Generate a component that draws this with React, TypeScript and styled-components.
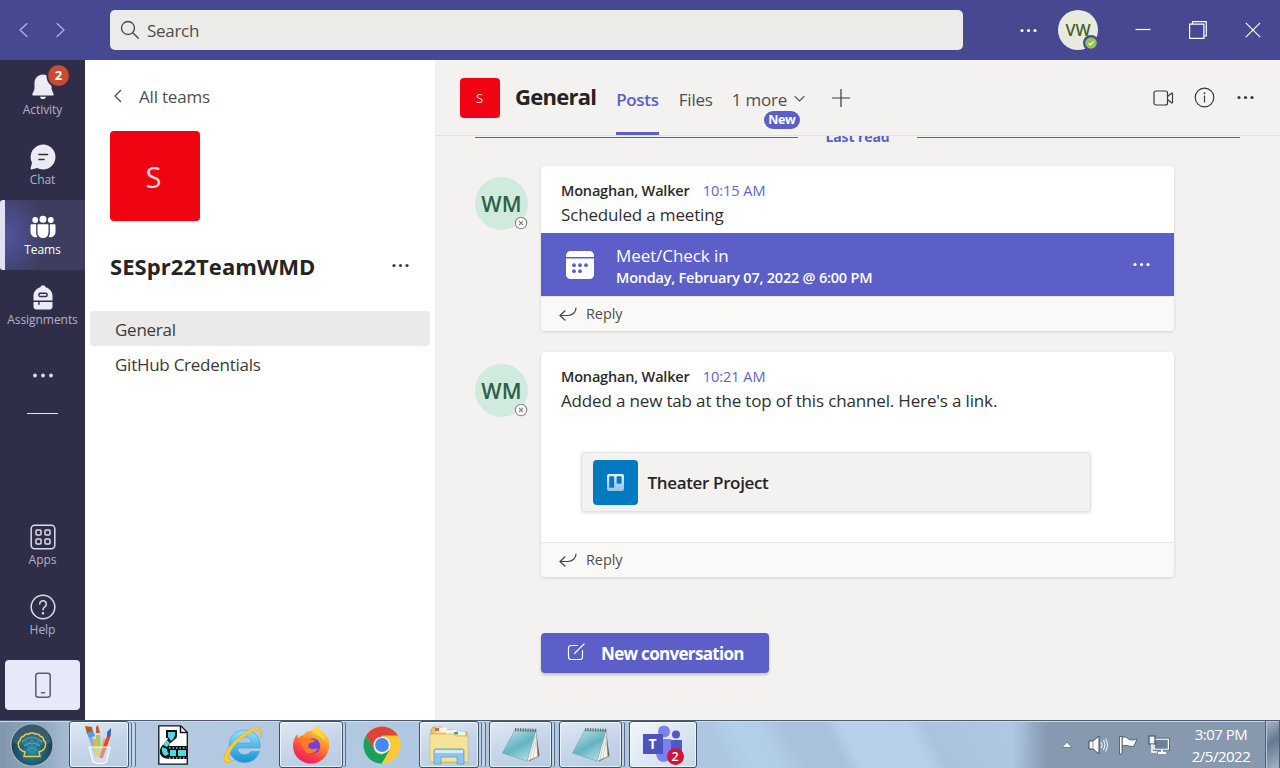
import React from 'react';
import styled, { createGlobalStyle, css } from 'styled-components';

const Global = createGlobalStyle`
  * { box-sizing: border-box; }
  body { margin: 0; overflow: hidden; font-family: 'Open Sans', 'Noto Sans', sans-serif; }
  svg { display: block; flex: none; }
`;

const Screen = styled.div`
  width: 1280px;
  height: 768px;
  display: flex;
  flex-direction: column;
  color: #252423;
  white-space: nowrap;
`;

/* ---------- title bar ---------- */
const TitleBar = styled.header`
  height: 60px;
  flex: none;
  display: flex;
  align-items: center;
  background: #464891;
  color: #fff;
`;
const NavArrows = styled.div`
  width: 110px;
  padding-left: 18px;
  display: flex;
  gap: 24px;
`;
const SearchBox = styled.div`
  width: 853px;
  height: 40px;
  border-radius: 5px;
  background: #ebebe9;
  color: #504e4c;
  display: flex;
  align-items: center;
  gap: 7px;
  padding-left: 10px;
  font-size: 17px;
  letter-spacing: -0.3px;
`;
const TitleActions = styled.div`
  flex: 1;
  display: flex;
  align-items: center;
  padding-left: 57px;
`;
const Me = styled.div`
  position: relative;
  width: 40px;
  height: 40px;
  margin: 0 37px 0 21px;
  border-radius: 50%;
  background: #e7ebdd;
  color: #4a5f2c;
  font-size: 16px;
  font-weight: 600;
  letter-spacing: -0.1px;
  display: flex;
  align-items: center;
  justify-content: center;
`;
const Badge = styled.span`
  position: absolute;
  display: flex;
`;
const MeBadge = styled(Badge)`right: -1px; bottom: -1px;`;
const WindowButtons = styled.div`
  display: flex;
  align-items: center;
  gap: 38px;
`;

/* ---------- body ---------- */
const Body = styled.div`
  height: 660px;
  flex: none;
  display: flex;
`;
const Rail = styled.nav`
  width: 85px;
  background: #2f2e49;
  display: flex;
  flex-direction: column;
  align-items: center;
`;
const RailItem = styled.div<{ $active?: boolean }>`
  position: relative;
  width: 85px;
  height: 70px;
  flex: none;
  display: flex;
  flex-direction: column;
  align-items: center;
  padding-top: 14px;
  color: #b3b2c4;
  font-size: 12px;
  line-height: 16px;
  letter-spacing: -0.05px;
  gap: 2px;
  ${p => p.$active && css`
    color: #fff;
    border-left: 5px solid #e2e2f6;
    border-radius: 3px 0 0 3px;
    padding-right: 5px;
    background: radial-gradient(ellipse 42px 50px at 0 50%, #5356a0 0%, #484a84 45%, #3d3e5f 100%);
  `}
`;
const Count = styled.span`
  position: absolute;
  left: 48px;
  top: 5px;
  width: 21px;
  height: 21px;
  border-radius: 50%;
  background: #cc4a31;
  color: #fff;
  font-size: 13px;
  font-weight: 700;
  line-height: 21px;
  text-align: center;
`;
const RailMore = styled.div`
  height: 70px;
  display: flex;
  align-items: center;
`;
const RailRule = styled.div`
  width: 31px;
  height: 1px;
  margin: 3px 0 96px;
  background: #e0e0ec;
`;
const PhoneButton = styled.div`
  width: 75px;
  height: 50px;
  margin-top: 10px;
  border-radius: 4px;
  background: #e8e9f8;
  display: flex;
  align-items: center;
  justify-content: center;
`;

/* ---------- team panel ---------- */
const TeamPanel = styled.aside`
  width: 350px;
  background: #fff;
  display: flex;
  flex-direction: column;
`;
const BackLink = styled.div`
  display: flex;
  align-items: center;
  gap: 16px;
  height: 24px;
  margin: 24px 0 23px 28px;
  color: #504e4c;
  font-size: 17px;
  letter-spacing: -0.2px;
`;
const TeamTile = styled.div<{ $size: number; $font: number }>`
  width: ${p => p.$size}px;
  height: ${p => p.$size}px;
  flex: none;
  border-radius: 4px;
  background: #f00411;
  color: #f9dcdc;
  font-size: ${p => p.$font}px;
  padding-right: ${p => (p.$size > 50 ? 3 : 1)}px;
  display: flex;
  align-items: center;
  justify-content: center;
`;
const TeamBlock = styled.div`padding-left: 25px;`;
const TeamTitle = styled.div`
  display: flex;
  align-items: center;
  justify-content: space-between;
  height: 30px;
  margin: 30px 26px 30px 25px;
  font-size: 22px;
  font-weight: 700;
  letter-spacing: 0.06px;
  svg { margin-bottom: 1px; }
`;
const Channel = styled.div<{ $selected?: boolean }>`
  height: 35px;
  margin: 0 5px;
  padding-left: 25px;
  border-radius: 4px;
  background: ${p => (p.$selected ? '#ebeae9' : 'transparent')};
  color: #3b3a39;
  font-size: 17px;
  letter-spacing: -0.26px;
  line-height: 37px;
`;

/* ---------- channel ---------- */
const Main = styled.main`
  flex: 1;
  background: #f3f2f1;
  display: flex;
  flex-direction: column;
`;
const ChannelHeader = styled.div`
  height: 76px;
  flex: none;
  border-bottom: 1px solid #e3e2e1;
  display: flex;
  padding: 0 26px 0 25px;
`;
const HeaderTile = styled.div`padding: 18px 15px 0 0;`;
const ChannelName = styled.h1`
  margin: 0 20px 0 0;
  font-size: 22px;
  font-weight: 700;
  line-height: 72px;
  letter-spacing: -0.75px;
`;
const Tab = styled.div<{ $active?: boolean; $gap: number }>`
  position: relative;
  height: 75px;
  margin-right: ${p => p.$gap}px;
  display: flex;
  gap: 7px;
  align-items: center;
  padding-top: ${p => (p.$active ? 6 : 3)}px;
  border-bottom: ${p => (p.$active ? '3px solid #5b5fc7' : '0')};
  color: ${p => (p.$active ? '#5b5fc7' : '#504e4c')};
  font-weight: ${p => (p.$active ? 600 : 400)};
  font-size: 17px;
  letter-spacing: ${p => (p.$active ? -0.3 : -0.2)}px;
`;
const NewPill = styled.span`
  position: absolute;
  left: 32px;
  top: 51px;
  width: 36px;
  height: 18px;
  border-radius: 9px;
  background: #5b5fc7;
  color: #fff;
  font-size: 12.5px;
  font-weight: 700;
  line-height: 17px;
  letter-spacing: -0.4px;
  text-align: center;
`;
const HeaderActions = styled.div`
  flex: 1;
  display: flex;
  align-items: center;
  justify-content: flex-end;
  gap: 20px;
`;
const MoreActions = styled.div`padding-left: 2px;`;
const AddTab = styled.div`display: flex; align-items: center;`;

const Feed = styled.div`
  flex: 1;
  overflow: hidden;
  padding-left: 40px;
`;
const LastRead = styled.div`
  display: flex;
  align-items: center;
  width: 765px;
  height: 20px;
  margin: -9px 0 19px;
  color: #5b5fc7;
  font-size: 14px;
  font-weight: 700;
  letter-spacing: -0.1px;
  line-height: 18px;
  &::before, &::after { content: ''; flex: 1; height: 1px; background: #5b5fc7; margin-top: 1px; }
  span { width: 119px; text-align: center; }
`;
const Post = styled.article`
  display: flex;
  gap: 13px;
  margin-bottom: 21px;
`;
const Avatar = styled.div<{ $top: number }>`
  position: relative;
  width: 53px;
  height: 53px;
  margin-top: ${p => p.$top}px;
  border-radius: 50%;
  background: #d0ebdd;
  color: #2b6149;
  font-size: 21.5px;
  font-weight: 600;
  letter-spacing: 0.2px;
  padding-bottom: 1px;
  display: flex;
  align-items: center;
  justify-content: center;
`;
const AvatarBadge = styled(Badge)`right: 0; bottom: 0;`;
const Card = styled.div`
  width: 633px;
  border-radius: 4px;
  background: #fff;
  box-shadow: 0 1px 3px rgba(0, 0, 0, 0.14);
  overflow: hidden;
`;
const CardText = styled.div<{ $height: number }>`
  height: ${p => p.$height}px;
  padding: 12px 20px 0;
`;
const Byline = styled.div`
  display: flex;
  gap: 13px;
  height: 24px;
  align-items: center;
  font-size: 14.5px;
  color: #6264c9;
  letter-spacing: -0.02px;
`;
const Author = styled.span`
  color: #2b2a29;
  font-weight: 600;
  font-size: 14.5px;
  letter-spacing: -0.18px;
`;
const Message = styled.div`
  height: 24px;
  line-height: 26px;
  font-size: 17px;
  letter-spacing: -0.16px;
  color: #302f2e;
`;
const Meeting = styled.div`
  height: 63px;
  background: #5b5fc7;
  color: #fff;
  display: flex;
  align-items: center;
  padding: 0 24px 0 25px;
`;
const MeetingText = styled.div`
  flex: 1;
  padding: 4px 0 0 22px;
  font-size: 17px;
  letter-spacing: -0.08px;
  line-height: 22px;
`;
const MeetingTime = styled.div`
  font-size: 14.5px;
  font-weight: 600;
  letter-spacing: -0.22px;
  line-height: 22px;
`;
const Reply = styled.div`
  height: 35px;
  border-top: 1px solid #e9e8e7;
  background: #faf9f8;
  display: flex;
  align-items: center;
  gap: 9px;
  padding-left: 18px;
  font-size: 14.5px;
  letter-spacing: -0.1px;
  color: #504e4c;
  span { padding-bottom: 2px; }
`;
const TabLink = styled.div`
  width: 510px;
  height: 60px;
  margin: 40px 0 0 20px;
  padding: 7px 11px;
  border: 1px solid #e3e2e1;
  border-radius: 4px;
  background: #f3f2f1;
  box-shadow: 0 1px 3px rgba(0, 0, 0, 0.12);
  display: flex;
  align-items: center;
  gap: 9.5px;
  font-size: 17px;
  font-weight: 600;
  letter-spacing: -0.35px;
`;
const TrelloTile = styled.div`
  width: 45px;
  height: 45px;
  border-radius: 4px;
  background: #0279c1;
  display: flex;
  align-items: center;
  justify-content: center;
`;
const NewConversation = styled.button`
  width: 228px;
  height: 40px;
  margin: 56px 0 0 66px;
  border: 0;
  border-radius: 4px;
  background: #5b5fc7;
  box-shadow: 0 2px 3px rgba(0, 0, 0, 0.2);
  color: #fff;
  font: 700 17px 'Open Sans', sans-serif;
  letter-spacing: -0.68px;
  display: flex;
  align-items: center;
  gap: 16px;
  padding: 0 0 0 26px;
  svg { margin-bottom: 2px; }
`;

/* ---------- taskbar ---------- */
const Taskbar = styled.footer`
  height: 48px;
  flex: none;
  display: flex;
  align-items: stretch;
  border-top: 1px solid #4b5c72;
  box-shadow: inset 0 1px 0 #c9dbee;
  background:
    linear-gradient(90deg, #8197ae 0, #8fa5bd 40px, rgba(143, 165, 189, 0) 85px, rgba(134, 153, 176, 0) 1012px, #8699b0 1046px, #8799ae 1280px),
    linear-gradient(62deg, #b4cae3 0, #b3c9e2 250px, #adc6e1 640px, #b2d0ea 668px, #b2cde8 690px, #a9c1dd 712px, #a9c1dd 748px, #b9d0ea 762px, #b7d0e9 820px, #a9c3df 838px, #b0cae5 920px, #a9c6e6 1000px);
`;
const Slot = styled.div<{ $w: number; $ml?: number }>`
  width: ${p => p.$w}px;
  margin-left: ${p => p.$ml ?? 0}px;
  display: flex;
  align-items: center;
  justify-content: center;
`;
const TaskButton = styled(Slot)<{ $stack?: number; $bright?: boolean }>`
  border: 1px solid #3f4f66;
  border-radius: 3px;
  background: ${p => (p.$bright
    ? 'linear-gradient(135deg, #f2f6fb 0%, #dbe6f3 55%, #c9d9ec 100%)'
    : 'linear-gradient(160deg, #dfe9f4 0%, #c6d6e9 50%, #b6cbe3 100%)')};
  box-shadow: inset 0 0 0 1px rgba(255, 255, 255, 0.65)
    ${p => (p.$stack ? ', 3px 0 0 -1px #c0d2e7, 4px 0 0 -1px #5c6d83' : '')}
    ${p => (p.$stack && p.$stack > 1 ? ', 7px 0 0 -1px #bfd2e8, 8px 0 0 -1px #5c6d83' : '')};
`;
const Tray = styled.div`
  margin-left: auto;
  display: flex;
  align-items: center;
  color: #fff;
`;
const TrayIcons = styled.div`
  display: flex;
  align-items: center;
  gap: 10px;
  width: 129px;
`;
const Clock = styled.div`
  width: 60px;
  margin: 0 14px 0 1px;
  font-size: 15px;
  line-height: 22px;
  letter-spacing: -0.5px;
  display: flex;
  flex-direction: column;
  align-items: center;
`;
const ShowDesktop = styled.div`
  width: 15px;
  align-self: stretch;
  border-left: 1px solid #4d5f75;
  border-right: 1px solid #4d5f75;
  box-shadow: inset 1px 1px 0 #b7c5d4;
  background: linear-gradient(145deg, #a6b5c6 0%, #66798f 45%, #a3b4c6 100%);
`;

/* ---------- icons ---------- */
const Dots = ({ color, gap = 6, r = 1.6 }: { color: string; gap?: number; r?: number }) => (
  <svg width={gap * 2 + 4} height="5" fill={color}>
    {[0, 1, 2].map(i => <circle key={i} cx={2 + i * gap} cy="2.5" r={r} />)}
  </svg>
);
const Chevron = ({ d, w, h, color }: { d: string; w: number; h: number; color: string }) => (
  <svg width={w} height={h} fill="none" stroke={color} strokeWidth="1.2" strokeLinecap="round" strokeLinejoin="round"><path d={d} /></svg>
);
const BellIcon = () => (
  <svg width="26" height="26" viewBox="0 0 26 26" fill="#ebebf3">
    <path d="M13 .5c-5 0-8.500 3.800-8.500 8.500v6L2.300 20.300c-.2.600.1 1.200.8 1.200h19.800c.7 0 1-.6.800-1.200L21.500 15V9C21.500 4.300 18 .5 13 .5z" />
    <path d="M9.800 22.800h6.400a3.300 3.300 0 0 1-6.400 0z" />
    <circle cx="28.500" cy="2" r="12" fill="#2f2e49" />
  </svg>
);
const ChatIcon = () => (
  <svg width="26" height="26" viewBox="0 0 26 26">
    <path d="M13 .500a12.500 12.500 0 1 1-5.800 23.600L1.500 25.500c-.6.100-1-.4-.9-1L2 18.800A12.500 12.500 0 0 1 13 .500z" fill="#ebebf3" />
    <path d="M9 10.500h8.500M9 15.500h5" stroke="#2f2e49" strokeWidth="1.600" strokeLinecap="round" />
  </svg>
);
const TeamsIcon = () => (
  <svg width="26" height="26" viewBox="0 0 26 26" fill="#fff">
    <circle cx="13" cy="5.200" r="3.500" /><circle cx="5.200" cy="6" r="2.900" /><circle cx="20.800" cy="6" r="2.900" />
    <path d="M8.800 10.200h8.400c.8 0 1.300.5 1.300 1.300v7a5.500 5.500 0 0 1-11 0v-7c0-.8.5-1.300 1.300-1.300z" />
    <path d="M.500 11.500c0-.8.5-1.300 1.300-1.300h4.300v8.500c0 1.500.5 2.900 1.300 4A4.800 4.800 0 0 1 .500 18zM25.500 11.500c0-.8-.5-1.300-1.300-1.300h-4.300v8.500c0 1.500-.5 2.900-1.300 4a4.800 4.800 0 0 0 6.900-4.700z" />
  </svg>
);
const BackpackIcon = () => (
  <svg width="26" height="26" viewBox="0 0 26 26" fill="#ebebf3">
    <path d="M10.300 3.200a2.800 2.800 0 0 1 5.400 0c4 1.200 6.800 4.600 6.800 8.800v4.500h-19V12c0-4.200 2.800-7.600 6.800-8.800z" />
    <path d="M3.500 18h4.800v2.300c0 .4.300.7.700.7s.7-.3.700-.7V18h12.800v4.500c0 1.700-1.200 3-2.900 3H6.400c-1.700 0-2.900-1.300-2.900-3z" />
    <rect x="8.800" y="9.300" width="8.400" height="3.200" rx="1.600" fill="#ebebf3" stroke="#2f2e49" strokeWidth="1.400" />
  </svg>
);
const AppsIcon = () => (
  <svg width="26" height="26" viewBox="0 0 26 26" fill="none" stroke="#dcdce8" strokeWidth="1.500">
    <rect x="1.200" y="1.200" width="23.600" height="23.600" rx="3.500" />
    <rect x="6" y="6" width="5" height="5" rx="1" /><rect x="15" y="6" width="5" height="5" rx="1" />
    <rect x="6" y="15" width="5" height="5" rx="1" /><rect x="15" y="15" width="5" height="5" rx="1" />
  </svg>
);
const HelpIcon = () => (
  <svg width="26" height="26" viewBox="0 0 26 26" fill="none" stroke="#dcdce8" strokeWidth="1.500" strokeLinecap="round">
    <circle cx="13" cy="13" r="11.800" />
    <path d="M9.700 10a3.300 3.300 0 1 1 5.300 2.600c-1.200.9-2 1.600-2 3.200" /><circle cx="13" cy="19.200" r=".5" fill="#dcdce8" />
  </svg>
);
const PhoneIcon = () => (
  <svg width="16" height="26" viewBox="0 0 16 26" fill="none" stroke="#5d5d66" strokeWidth="1.500" strokeLinecap="round">
    <rect x=".8" y="1.300" width="14.400" height="23.900" rx="2.500" /><path d="M6.500 20.800h3" />
  </svg>
);
const SearchIcon = () => (
  <svg width="20" height="20" viewBox="0 0 20 20" fill="none" stroke="#484644" strokeWidth="1.300" strokeLinecap="round">
    <circle cx="8" cy="8" r="6.500" /><path d="M12.800 12.800l5.500 5.500" />
  </svg>
);
const VideoIcon = () => (
  <svg width="21" height="18" viewBox="0 0 21 18" fill="none" stroke="#3b3a39" strokeWidth="1.200" strokeLinejoin="round">
    <rect x="1" y="2" width="13.500" height="14" rx="2" /><path d="M14.500 7.500l4-3.200c.5-.4 1-.1 1 .4v8.600c0 .5-.5.800-1 .4l-4-3.200" />
  </svg>
);
const InfoIcon = () => (
  <svg width="21" height="21" viewBox="0 0 21 21" fill="none" stroke="#3b3a39" strokeWidth="1.200" strokeLinecap="round">
    <circle cx="10.500" cy="10.500" r="9.300" /><path d="M10.500 9v6" /><circle cx="10.500" cy="6.300" r=".4" fill="#3b3a39" />
  </svg>
);
const Offline = () => (
  <svg width="14" height="14" viewBox="0 0 14 14" fill="none" stroke="#86837f">
    <circle cx="7" cy="7" r="6.800" fill="#f3f2f1" stroke="none" /><circle cx="7" cy="7" r="5.700" fill="#fff" strokeWidth="1.100" />
    <path d="M5 5l4 4M9 5l-4 4" strokeWidth="1.100" />
  </svg>
);
const CalendarIcon = () => (
  <svg width="28" height="28" viewBox="0 0 28 28" fill="#fff">
    <path d="M4.500 0h19A4.500 4.500 0 0 1 28 4.500V6H0V4.500A4.500 4.500 0 0 1 4.500 0z" />
    <path d="M0 7.500h28v16a4.500 4.500 0 0 1-4.500 4.500h-19A4.500 4.500 0 0 1 0 23.500z" />
    <g fill="#5b5fc7"><circle cx="8" cy="14.200" r="1.900" /><circle cx="14" cy="14.200" r="1.900" /><circle cx="20" cy="14.200" r="1.900" /><circle cx="8" cy="20.200" r="1.900" /><circle cx="14" cy="20.200" r="1.900" /></g>
  </svg>
);
const ReplyIcon = () => (
  <svg width="18" height="14" viewBox="0 0 18 14" fill="none" stroke="#484644" strokeWidth="1.200" strokeLinecap="round" strokeLinejoin="round">
    <path d="M17 1c0 4-3.500 7.500-8 7.500H1M6 3.800L1 8.500l5 4.700" />
  </svg>
);
const TrelloIcon = () => (
  <svg width="17" height="17" viewBox="0 0 17 17">
    <defs><linearGradient id="tr" x2="0" y2="1"><stop stopColor="#e6f3fb" /><stop offset="1" stopColor="#8fc5e8" /></linearGradient></defs>
    <rect width="17" height="17" rx="2" fill="url(#tr)" /><rect x="2.200" y="2.200" width="5" height="11.500" rx=".8" fill="#0279c1" /><rect x="9.600" y="2.200" width="5" height="7.500" rx=".8" fill="#0279c1" />
  </svg>
);
const ComposeIcon = () => (
  <svg width="18" height="18" viewBox="0 0 18 18" fill="none" stroke="#fff" strokeWidth="1.200" strokeLinecap="round" strokeLinejoin="round">
    <path d="M10.500 2.500H4A2.500 2.500 0 0 0 1.500 5v9A2.500 2.500 0 0 0 4 16.500h9a2.500 2.500 0 0 0 2.500-2.500V7.500M17 1L7.500 10.500" />
  </svg>
);

const StartOrb = () => (
  <svg width="44" height="44" viewBox="0 0 44 44">
    <defs><radialGradient id="orb" cy=".65"><stop stopColor="#2b8ba0" /><stop offset=".6" stopColor="#235c70" /><stop offset="1" stopColor="#1d3f54" /></radialGradient></defs>
    <circle cx="22" cy="22" r="21" fill="url(#orb)" stroke="#9fb7c8" strokeWidth="1.200" />
    <path d="M3 20a19 19 0 0 1 38 0q-19 5-38 0z" fill="#6d8f9f" opacity=".35" />
    <g fill="none" stroke="#37b5cf" strokeWidth="1.200"><path d="M12 19c6-6 14-6 20 0M14 23c5-4 11-4 16 0M17 27c3-3 7-3 10 0" /><path d="M22 13v18M15 15l5 15M29 15l-5 15" stroke="#2b92ab" /></g>
    <path d="M15 29c-4-1-6.500-4-6.800-8 0-2 .8-3 2-3.500.3-2.500 1.500-4 3.500-4.300 1-1.800 2.800-2.500 4.500-2 2-1.500 5.500-1.500 7.500 0 1.800-.5 3.500.2 4.500 2 2 .3 3.300 1.800 3.500 4.300 1.200.5 2 1.500 2 3.500-.3 4-2.700 7-6.700 8l1 4.500H14z" fill="none" stroke="#e9cf4e" strokeWidth="1.500" />
  </svg>
);
const PaintIcon = () => (
  <svg width="30" height="40" viewBox="0 0 30 40">
    <path d="M5 8l8 24" stroke="#7fb2dc" strokeWidth="3.500" /><path d="M1 1l7 1 1 5-6 2z" fill="#b5582a" /><path d="M3 8l6-2 2 5-6 2z" fill="#4d9fe0" />
    <path d="M14 10l1 22" stroke="#a8c95b" strokeWidth="4" /><path d="M10 14l3 18" stroke="#f1b32b" strokeWidth="3" />
    <path d="M21 14l-4 18" stroke="#f6a623" strokeWidth="3" /><path d="M25.500 9L17 33" stroke="#d9492f" strokeWidth="3.500" />
    <path d="M23 7l4-4v5l-2 4-2-1z" fill="#2d6fb8" /><path d="M12 2l2-2 2 8h-4z" fill="#c35a2c" />
    <path d="M5 22h21l-3.500 15q-7 3.500-13.500 0z" fill="#e9f3f8" fillOpacity=".4" stroke="#f8fcff" strokeWidth="1.200" />
  </svg>
);
const FilmIcon = () => (
  <svg width="30" height="40" viewBox="0 0 30 40">
    <path d="M.8.800h22l6.500 6.500v31.900H.8z" fill="#fff" stroke="#111" strokeWidth="1.300" /><path d="M22.500 1v6.500H29" fill="none" stroke="#111" strokeWidth="1.500" />
    <path d="M8 5h11v6c0 4-8 6-8 10h18v13H13C5 34 1 31 2 25c1-5 7-8 8-12H8z" fill="#111" />
    <path d="M10 7h7v3q-1 4-4 6l-3-4zM9 15l3 3-3 4-4-2zM4 22l5 2q0 3 2 5l-4 2q-4-3-3-9zM12 25h6v6h-6zM20 25h8v6h-8z" fill="#4fd8e6" />
    <path d="M11 23h18M11 33h18" stroke="#fff" strokeWidth="1.200" strokeDasharray="1.500 2" />
  </svg>
);
const IeIcon = () => (
  <svg width="42" height="38" viewBox="0 0 42 38">
    <defs><linearGradient id="ie" x2="0" y2="1"><stop stopColor="#8fe0fa" /><stop offset="1" stopColor="#1792d8" /></linearGradient></defs>
    <path d="M37 22H14.500c.5 4 3.200 6.500 7 6.500 2.700 0 4.700-1 6-3h9C34.500 32 29 36.500 21.500 36.500c-9 0-15.500-6.500-15.500-16S12.500 4 21.500 4C31 4 38 11 37 22zM14.500 17h14c-.3-3.500-3-6-7-6s-6.700 2.500-7 6z" fill="url(#ie)" stroke="#3aa3dc" strokeWidth=".6" />
    <path d="M37.500 12c3-7 1-11-6-10C22 4 3 20 1 32c-.7 4.500 3 6.500 9 2.500-4 .5-5-1.500-4-5.500C9 20 21 9 31 5c5-2 8-.5 6.500 7z" fill="#f7ce38" stroke="#e0a61d" strokeWidth=".5" />
  </svg>
);
const FirefoxIcon = () => (
  <svg width="38" height="38" viewBox="0 0 38 38">
    <defs><linearGradient id="ff" x1=".8" y1="0" x2=".3" y2="1"><stop stopColor="#ffe24a" /><stop offset=".4" stopColor="#ff9327" /><stop offset=".75" stopColor="#fb3c43" /><stop offset="1" stopColor="#e0216f" /></linearGradient></defs>
    <path d="M26 0c2 5 4 5 6 7 3.500 3 5.500 7.500 5.200 13C36.500 30 29 37.500 19 37.500S1 30 1 20C1 15 2.500 11 5.500 8L6 12c2-2 4-3 6-3 2-4 5-4 7-4z" fill="url(#ff)" />
    <path d="M19 5c4-1 3-4 7-5 1 5 6 8 7 14z" fill="#ffd93b" />
    <circle cx="20.500" cy="20" r="7.800" fill="#7542d5" /><path d="M11 14c3-3 6-2 8-1 2 .8 3 1 4 1-1 3-5 2.500-6 4-2 2 0 5 3 5 3 .2 4-1 6-.5-2 4-6 5.500-10 4.500-5-1.500-7-8-5-13z" fill="#ff7b29" />
  </svg>
);
const ChromeIcon = () => (
  <svg width="38" height="38" viewBox="0 0 38 38">
    <circle cx="19" cy="19" r="18.500" fill="#fdc936" />
    <path d="M3 9.700A18.500 18.500 0 0 1 35 9.800H19L11 24z" fill="#dd4437" />
    <path d="M3 9.700L11 23.600c2 3.300 5 4.800 8 4.800h8L18 37.500A18.500 18.500 0 0 1 3 9.700z" fill="#19a05d" />
    <path d="M19 28.500l8-5-8.500 14h-1z" fill="#19a05d" />
    <path d="M27 23.600L18.800 37.500A18.500 18.500 0 0 0 35 9.800H19z" fill="#fdc936" />
    <circle cx="19" cy="19" r="8.600" fill="#f4f4f4" /><circle cx="19" cy="19" r="6.900" fill="#4587f3" />
  </svg>
);
const ExplorerIcon = () => (
  <svg width="42" height="40" viewBox="0 0 42 40">
    <path d="M3 5l2-3h9l3 3h8l2 2h12v30H3z" fill="#e9c65f" stroke="#b9933a" strokeWidth=".6" />
    <rect x="8" y="2.500" width="11" height="5" fill="#f4f4ea" /><rect x="18" y="5" width="10" height="4" fill="#f4f4ea" /><rect x="27" y="6.500" width="10" height="4" fill="#f4f4ea" />
    <path d="M7 3h4v3H7z" fill="#da6a45" /><path d="M26 7h4v2.500h-4z" fill="#4faa5a" />
    <path d="M2 9h24l2 2h12v26H2z" fill="#f6e398" stroke="#cfae55" strokeWidth=".6" />
    <path d="M6 26c0-1.500.8-2 2-2h26c1.200 0 2 .5 2 2v13h-7v-7H13v7H6z" fill="#8cc6ea" stroke="#5d9fcb" strokeWidth=".8" /><path d="M7 25h28v3H7z" fill="#d2ecf9" />
  </svg>
);
const NotepadIcon = () => (
  <svg width="38" height="36" viewBox="0 0 38 36">
    <path d="M34 3l3.500 26L27 34.500z" fill="#7d6242" /><path d="M34 3l1.500 26.500L25 34z" fill="#f6f6ef" stroke="#bbb" strokeWidth=".5" />
    <path d="M28 32l5.500-23M31 31l3-17" stroke="#b9c4c8" strokeWidth=".7" />
    <defs><linearGradient id="np" x2=".6" y2="1"><stop stopColor="#c3e8ec" /><stop offset=".6" stopColor="#64b3c2" /><stop offset="1" stopColor="#a8dbe0" /></linearGradient></defs>
    <path d="M13 3h21L25 34 .5 26z" fill="url(#np)" stroke="#5b9aa8" strokeWidth=".5" />
    <path d="M13 2.500l22 1" stroke="#5f6568" strokeWidth="3.200" strokeDasharray="1.200 1.300" />
  </svg>
);
const TaskLogo = styled.div`position: relative; display: flex;`;
const LogoLetter = styled.span`
  position: absolute; left: 0; top: 9px; width: 20px; height: 20px;
  background: #4b53bc; color: #fff; font-size: 14px; font-weight: 700; line-height: 20px; text-align: center;
`;
const LogoCount = styled.span`
  position: absolute; left: 24px; top: 23px; width: 17px; height: 17px; border-radius: 50%;
  background: #cf1539; color: #fff; font-size: 12.5px; font-weight: 600; line-height: 17px; text-align: center;
`;
const TeamsLogo = () => (
  <TaskLogo>
    <svg width="41" height="40" viewBox="0 0 41 40">
      <circle cx="33" cy="9.500" r="4" fill="#5059c9" /><path d="M26 15h13v9c0 5-3 8-7 8s-6-3-6-8z" fill="#5059c9" />
      <circle cx="21" cy="6.500" r="6" fill="#7b83eb" /><path d="M13 14h15v13c0 6-3 10-7.500 10S13 33 13 27z" fill="#7b83eb" />
    </svg>
    <LogoLetter>T</LogoLetter>
    <LogoCount>2</LogoCount>
  </TaskLogo>
);
const TrayUp = () => <svg width="12" height="8"><path d="M1 6.500L6 1l5 5.500z" fill="#f5f8fb" stroke="#5a6b80" strokeWidth=".8" /></svg>;
const SpeakerIcon = () => (
  <svg width="20" height="20" viewBox="0 0 20 20">
    <path d="M1 6h4l6-5v18l-6-5H1z" fill="#f6f7f9" stroke="#3d4b5c" strokeWidth="1" /><path d="M5 6v8" stroke="#8c98a6" />
    <path d="M13 7q2 3 0 6M15.300 5q3 5 0 10M17.500 3.500q4 6.500 0 13" fill="none" stroke="#e9eef4" strokeWidth="1.100" />
  </svg>
);
const FlagIcon = () => (
  <svg width="20" height="20" viewBox="0 0 20 20" stroke="#3d4b5c" strokeWidth=".8">
    <path d="M4 2.500c4-2 6 2 9 2.500 2 .3 4-.5 6-1l-3 7c-5 1.500-6-2-12 0z" fill="#fff" /><path d="M1.500 1.500h2.500v17.500H1.500z" fill="#fff" />
  </svg>
);
const NetworkIcon = () => (
  <svg width="22" height="20" viewBox="0 0 22 20">
    <rect x="6" y="4" width="14.500" height="10.500" fill="#6c8098" stroke="#fff" strokeWidth="1.500" /><path d="M5 3.200h16.500v12H5" fill="none" stroke="#2d3b4d" strokeWidth=".6" />
    <path d="M10 18h8M14 15v3" stroke="#fff" strokeWidth="2" /><rect x="1" y="1" width="6" height="8" fill="#e8ecf1" stroke="#2d3b4d" strokeWidth=".9" /><path d="M4 3v3M4 9v8h5" stroke="#fff" strokeWidth="1.500" fill="none" />
  </svg>
);

const PostHead = ({ time, text }: { time: string; text: string }) => (
  <>
    <Byline><Author>Monaghan, Walker</Author>{time}</Byline>
    <Message>{text}</Message>
  </>
);
const Person = ({ top }: { top: number }) => <Avatar $top={top}>WM<AvatarBadge><Offline /></AvatarBadge></Avatar>;

export default function App() {
  return (
    <Screen>
      <Global />
      <TitleBar>
        <NavArrows>
          <Chevron w={12} h={16} d="M9 1.500L2 8l7 6.500" color="#b3b4e2" />
          <Chevron w={12} h={16} d="M3 1.500L10 8l-7 6.500" color="#b3b4e2" />
        </NavArrows>
        <SearchBox><SearchIcon />Search</SearchBox>
        <TitleActions>
          <Dots color="#fff" gap={6.5} />
          <Me>VW
            <MeBadge>
              <svg width="16" height="16" viewBox="0 0 16 16"><circle cx="8" cy="8" r="8" fill="#464891" /><circle cx="8" cy="8" r="5.800" fill="#92c353" /><path d="M5.500 8.200l1.800 1.700 3.200-3.300" fill="none" stroke="#fff" strokeWidth="1.200" /></svg>
            </MeBadge>
          </Me>
          <WindowButtons>
            <svg width="16" height="20"><path d="M.5 9.500h15" stroke="#fff" strokeWidth="1.200" /></svg>
            <svg width="18" height="18" fill="none" stroke="#fff" strokeWidth="1.200"><path d="M.6 3.100h14.300v14.300H.6zM3.500 3V.700h13.800V15H15" /></svg>
            <svg width="16" height="16" stroke="#fff" strokeWidth="1.200"><path d="M.8.800l14.400 14.400M15.200.800L.8 15.200" /></svg>
          </WindowButtons>
        </TitleActions>
      </TitleBar>

      <Body>
        <Rail>
          <RailItem><BellIcon />Activity<Count>2</Count></RailItem>
          <RailItem><ChatIcon />Chat</RailItem>
          <RailItem $active><TeamsIcon />Teams</RailItem>
          <RailItem><BackpackIcon />Assignments</RailItem>
          <RailMore><Dots color="#dcdce8" gap={8} r={1.9} /></RailMore>
          <RailRule />
          <RailItem><AppsIcon />Apps</RailItem>
          <RailItem><HelpIcon />Help</RailItem>
          <PhoneButton><PhoneIcon /></PhoneButton>
        </Rail>

        <TeamPanel>
          <BackLink><Chevron w={10} h={14} d="M7.500 1.500L2 7l5.500 5.500" color="#484644" />All teams</BackLink>
          <TeamBlock><TeamTile $size={90} $font={29}>S</TeamTile></TeamBlock>
          <TeamTitle>SESpr22TeamWMD<Dots color="#3b3a39" gap={6.5} /></TeamTitle>
          <Channel $selected>General</Channel>
          <Channel>GitHub Credentials</Channel>
        </TeamPanel>

        <Main>
          <ChannelHeader>
            <HeaderTile><TeamTile $size={40} $font={13}>S</TeamTile></HeaderTile>
            <ChannelName>General</ChannelName>
            <Tab $active $gap={20}>Posts</Tab>
            <Tab $gap={19}>Files</Tab>
            <Tab $gap={27}>1 more<Chevron w={11} h={8} d="M1 1.500l4.500 4.500L10 1.500" color="#605e5c" /><NewPill>New</NewPill></Tab>
            <AddTab><svg width="18" height="20" stroke="#3b3a39" strokeWidth="1.200"><path d="M9 1v18M0 10h18" /></svg></AddTab>
            <HeaderActions><VideoIcon /><InfoIcon /><MoreActions><Dots color="#3b3a39" gap={6.5} /></MoreActions></HeaderActions>
          </ChannelHeader>
          <Feed>
            <LastRead><span>Last read</span></LastRead>
            <Post>
              <Person top={11} />
              <Card>
                <CardText $height={67}><PostHead time="10:15 AM" text="Scheduled a meeting" /></CardText>
                <Meeting>
                  <CalendarIcon />
                  <MeetingText>Meet/Check in<MeetingTime>Monday, February 07, 2022 @ 6:00 PM</MeetingTime></MeetingText>
                  <Dots color="#fff" gap={6.5} />
                </Meeting>
                <Reply><ReplyIcon /><span>Reply</span></Reply>
              </Card>
            </Post>
            <Post>
              <Person top={12} />
              <Card>
                <CardText $height={190}>
                  <PostHead time="10:21 AM" text="Added a new tab at the top of this channel. Here's a link." />
                  <TabLink><TrelloTile><TrelloIcon /></TrelloTile>Theater Project</TabLink>
                </CardText>
                <Reply><ReplyIcon /><span>Reply</span></Reply>
              </Card>
            </Post>
            <NewConversation><ComposeIcon />New conversation</NewConversation>
          </Feed>
        </Main>
      </Body>

      <Taskbar>
        <Slot $w={63}><StartOrb /></Slot>
        <TaskButton $w={60} $ml={6} $stack={2}><PaintIcon /></TaskButton>
        <Slot $w={30} $ml={29}><FilmIcon /></Slot>
        <Slot $w={42} $ml={35}><IeIcon /></Slot>
        <TaskButton $w={64} $ml={14} $stack={1}><FirefoxIcon /></TaskButton>
        <Slot $w={38} $ml={20}><ChromeIcon /></Slot>
        <TaskButton $w={60} $ml={18} $stack={2}><ExplorerIcon /></TaskButton>
        <TaskButton $w={63} $ml={10} $stack={1}><NotepadIcon /></TaskButton>
        <TaskButton $w={63} $ml={7} $stack={1}><NotepadIcon /></TaskButton>
        <TaskButton $w={68} $ml={7} $bright><TeamsLogo /></TaskButton>
        <Tray>
          <TrayIcons><TrayUp /><Slot $w={20} $ml={5}><SpeakerIcon /></Slot><FlagIcon /><NetworkIcon /></TrayIcons>
          <Clock><span>3:07 PM</span><span>2/5/2022</span></Clock>
          <ShowDesktop />
        </Tray>
      </Taskbar>
    </Screen>
  );
}
